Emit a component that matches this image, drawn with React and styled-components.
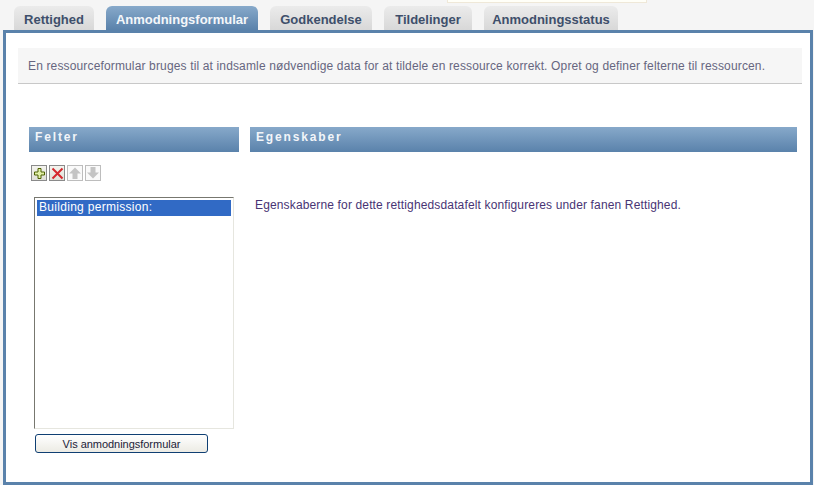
import React from 'react';
import styled, { createGlobalStyle } from 'styled-components';

const GlobalStyle = createGlobalStyle`
	html, body {
		margin: 0;
		padding: 0;
		background: #f5f5f5;
		font-family: 'Liberation Sans', Arial, sans-serif;
	}
	* {
		box-sizing: border-box;
	}
`;

const Page = styled.div`
	width: 814px;
	height: 485px;
	overflow: hidden;
	display: flex;
	flex-direction: column;
	position: relative;
`;

const TopNote = styled.div`
	position: absolute;
	left: 447px;
	top: -4px;
	width: 200px;
	height: 7px;
	background: #fffff8;
	border: 1px solid #efe8d8;
`;

const TabBar = styled.div`
	display: flex;
	gap: 12px;
	height: 30px;
	padding: 6px 0 0 14px;
`;

const Tab = styled.div`
	width: ${(p) => p.$width}px;
	height: 24px;
	border-radius: 6px 6px 0 0;
	display: flex;
	justify-content: center;
	padding-top: 6px;
	font-size: 13px;
	line-height: 16px;
	font-weight: bold;
	color: ${(p) => (p.$active ? '#f4f7fa' : '#3e4f6b')};
	background: ${(p) =>
		p.$active
			? 'linear-gradient(#87a9ca, #5a82ab)'
			: 'linear-gradient(#ebebeb, #d8d8d8)'};
`;

const Panel = styled.div`
	width: 810px;
	height: 455px;
	margin-left: 3px;
	background: #fff;
	border: 3px solid #5a82ab;
	padding: 15px 8px 0 12px;
`;

const InfoBar = styled.div`
	height: 36px;
	padding: 10px 10px 0;
	font-size: 12px;
	line-height: 16px;
	letter-spacing: 0.146px;
	color: #666680;
	background: #f6f6f6;
	border-bottom: 1px solid #c8c8c8;
`;

const Columns = styled.div`
	display: flex;
	gap: 11px;
	margin: 43px 0 0 11px;
`;

const LeftColumn = styled.div`
	width: 210px;
`;

const RightColumn = styled.div`
	width: 547px;
`;

const SectionHeader = styled.div`
	height: 25px;
	padding: 3px 6px 0;
	font-size: 12px;
	line-height: 15px;
	font-weight: bold;
	letter-spacing: 1.85px;
	color: #f2f5f9;
	background: linear-gradient(#87a9ca, #5a82ab);
`;

const Toolbar = styled.div`
	display: flex;
	gap: 2px;
	margin: 13px 0 0 2px;
`;

const IconButton = styled.div`
	width: 16px;
	height: 16px;
	display: flex;
	align-items: center;
	justify-content: center;
	border: 1px solid ${(p) => (p.$disabled ? '#bdbdbd' : '#8a8a8a')};
	background: ${(p) => (p.$disabled ? '#fafafa' : 'linear-gradient(#f4f4ee, #e0e0d8)')};
`;

const ListBox = styled.div`
	width: 200px;
	height: 232px;
	margin: 16px 0 0 5px;
	padding: 2px;
	background: #fff;
	border: 1px solid #e6e6df;
	border-top-color: #77776f;
	border-left-color: #77776f;
`;

const ListItem = styled.div`
	height: 16px;
	padding-left: 2px;
	font-size: 12px;
	line-height: 15px;
	letter-spacing: 0.3px;
	color: #fff;
	background: #316ac5;
`;

const ViewButton = styled.button`
	display: block;
	width: 173px;
	height: 19px;
	margin: 5px 0 0 6px;
	padding: 0;
	font-family: inherit;
	font-size: 11px;
	letter-spacing: -0.03px;
	color: #222238;
	background: linear-gradient(#ffffff, #ecebe4);
	border: 1px solid #0f3f73;
	border-radius: 3px;
`;

const PropertyText = styled.p`
	margin: 45px 0 0 5px;
	font-size: 12px;
	line-height: 16px;
	letter-spacing: 0.143px;
	color: #483474;
`;

const tabs = [
	{ label: 'Rettighed', width: 80 },
	{ label: 'Anmodningsformular', width: 152, active: true },
	{ label: 'Godkendelse', width: 102 },
	{ label: 'Tildelinger', width: 88 },
	{ label: 'Anmodningsstatus', width: 134 },
];

const AddIcon = () => (
	<svg width="11" height="11" viewBox="0 0 11 11">
		<path d="M4 .5h3V4h3.5v3H7v3.5H4V7H.5V4H4z" fill="#e2f0a8" stroke="#4d6000" />
	</svg>
);

const RemoveIcon = () => (
	<svg width="13" height="13" viewBox="0 0 13 13">
		<path d="M1.5 1.5l10 10M11.5 1.5l-10 10" stroke="#d5282e" strokeWidth="2" />
	</svg>
);

const ArrowIcon = ({ down }) => (
	<svg width="12" height="12" viewBox="0 0 12 12">
		<path
			d={down ? 'M3.5 0h5v5.5H12l-6 6-6-6h3.5z' : 'M6 .5l6 6H8.5V12h-5V6.5H0z'}
			fill="#c4c4c4"
		/>
	</svg>
);

const App = () => {
	return (
		<Page>
			<GlobalStyle />
			<TopNote />
			<TabBar>
				{tabs.map((tab) => (
					<Tab key={tab.label} $width={tab.width} $active={tab.active}>
						{tab.label}
					</Tab>
				))}
			</TabBar>
			<Panel>
				<InfoBar>
					En ressourceformular bruges til at indsamle nødvendige data for at tildele en ressource korrekt. Opret og definer felterne til ressourcen.
				</InfoBar>
				<Columns>
					<LeftColumn>
						<SectionHeader>Felter</SectionHeader>
						<Toolbar>
							<IconButton><AddIcon /></IconButton>
							<IconButton><RemoveIcon /></IconButton>
							<IconButton $disabled><ArrowIcon /></IconButton>
							<IconButton $disabled><ArrowIcon down /></IconButton>
						</Toolbar>
						<ListBox>
							<ListItem>Building permission:</ListItem>
						</ListBox>
						<ViewButton>Vis anmodningsformular</ViewButton>
					</LeftColumn>
					<RightColumn>
						<SectionHeader>Egenskaber</SectionHeader>
						<PropertyText>
							Egenskaberne for dette rettighedsdatafelt konfigureres under fanen Rettighed.
						</PropertyText>
					</RightColumn>
				</Columns>
			</Panel>
		</Page>
	);
};

export default App;
